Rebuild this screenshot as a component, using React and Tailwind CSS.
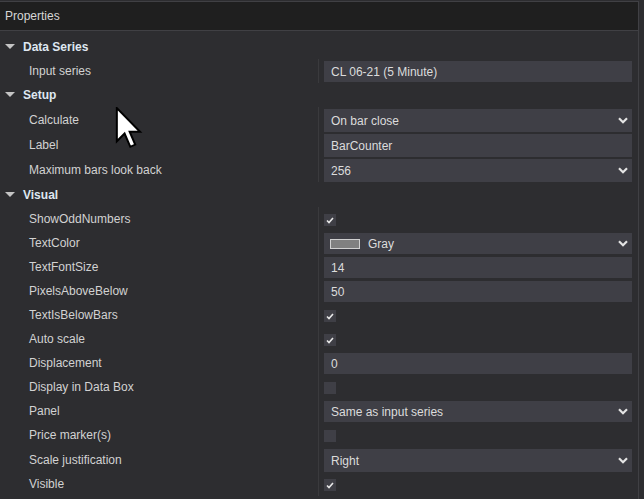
import React from 'react';

const groups = [
  {
    name: 'Data Series',
    rows: [{ label: 'Input series', type: 'text', value: 'CL 06-21 (5 Minute)' }],
  },
  {
    name: 'Setup',
    rows: [
      { label: 'Calculate', type: 'select', value: 'On bar close', tall: true },
      { label: 'Label', type: 'text', value: 'BarCounter', tall: true },
      { label: 'Maximum bars look back', type: 'select', value: '256', tall: true },
    ],
  },
  {
    name: 'Visual',
    tallHeader: true,
    rows: [
      { label: 'ShowOddNumbers', type: 'check', checked: true },
      { label: 'TextColor', type: 'color', value: 'Gray' },
      { label: 'TextFontSize', type: 'text', value: '14' },
      { label: 'PixelsAboveBelow', type: 'text', value: '50' },
      { label: 'TextIsBelowBars', type: 'check', checked: true },
      { label: 'Auto scale', type: 'check', checked: true },
      { label: 'Displacement', type: 'text', value: '0' },
      { label: 'Display in Data Box', type: 'check', checked: false },
      { label: 'Panel', type: 'select', value: 'Same as input series' },
      { label: 'Price marker(s)', type: 'check', checked: false },
      { label: 'Scale justification', type: 'select', value: 'Right', tall: true },
      { label: 'Visible', type: 'check', checked: true },
    ],
  },
];

function Chevron() {
  return (
    <svg width="10" height="7" viewBox="0 0 10 7" className="mr-[4px] shrink-0">
      <path d="M1 1.2 L5 5.2 L9 1.2" fill="none" stroke="#e4e4e4" strokeWidth="2.2" />
    </svg>
  );
}

function Check({ checked }) {
  return (
    <div className="mt-[7px] w-[12px] h-[12px] bg-[#3f3f46] flex items-center justify-center">
      {checked && (
        <svg width="8" height="7" viewBox="0 0 8 7">
          <path d="M1 3.5 L3 5.5 L7 1" fill="none" stroke="#e8e8e8" strokeWidth="1.6" />
        </svg>
      )}
    </div>
  );
}

function Value({ row }) {
  const h = row.tall ? 'h-[23px]' : 'h-[21px]';
  if (row.type === 'check') return <Check checked={row.checked} />;
  return (
    <div className={`mt-[2px] ${h} w-[308px] bg-[#3f3f46] flex items-center text-[12px] text-[#dcdcdc]`}>
      {row.type === 'color' && (
        <div className="ml-[6px] mr-[8px] w-[30px] h-[10px] bg-[#808080] border border-[#d0d0d0]" />
      )}
      <span className={`flex-1 ${row.type === 'color' ? '' : 'pl-[7px]'}`}>{row.value}</span>
      {(row.type === 'select' || row.type === 'color') && <Chevron />}
    </div>
  );
}

function Group({ group }) {
  return (
    <div>
      <div className={`${group.tallHeader ? 'h-[25px] pt-[1px]' : 'h-[24px]'} flex items-center`}>
        <svg width="10" height="6" viewBox="0 0 10 6" className="ml-[5px] mr-[8px]">
          <path d="M0 0 L10 0 L5 5 Z" fill="#c4c4c4" />
        </svg>
        <span className="font-bold text-[12px] text-[#dfe7f0]">{group.name}</span>
      </div>
      {group.rows.map((row) => (
        <div key={row.label} className={`flex ${row.tall ? 'h-[25px]' : 'h-[24px]'}`}>
          <div className="w-[318px] pl-[29px] flex items-center text-[12px] text-[#d2d2d2]">{row.label}</div>
          <div className="border-l border-[#3a3a3d] pl-[5px] flex-1">
            <Value row={row} />
          </div>
        </div>
      ))}
    </div>
  );
}

export default function App() {
  return (
    <div
      className="relative w-[644px] h-[499px] overflow-hidden bg-[#2d2d30]"
      style={{ fontFamily: '"Liberation Sans", Arial, sans-serif' }}
    >
      <div className="w-[639px] h-full border-r border-[#404044]">
        <div className="h-[30px] border-t border-b border-[#404044] mt-[1px] bg-[#1f1f1f] flex items-center pl-[5px] text-[12px] text-[#d6d6d6]">
          Properties
        </div>
        <div className="pt-[4px]">
          {groups.map((g) => (
            <Group key={g.name} group={g} />
          ))}
        </div>
      </div>

      {/* mouse cursor */}
      <svg
        className="absolute left-[114px] top-[107px]"
        width="30"
        height="42"
        viewBox="0 0 12 19"
      >
        <path
          d="M0.5 0.5 L0.5 15.5 L4 12 L6.6 18 L8.8 17 L6.3 11.2 L11 11.2 Z"
          fill="#ffffff"
          stroke="#000000"
          strokeWidth="0.9"
          strokeLinejoin="miter"
        />
      </svg>
    </div>
  );
}
